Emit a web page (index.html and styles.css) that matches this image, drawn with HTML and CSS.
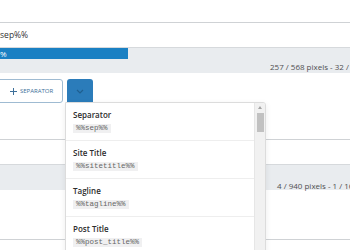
FILE: index.html
```html
<!DOCTYPE html>
<html lang="en">
<head>
    <meta charset="UTF-8">
    <meta name="viewport" content="width=device-width, initial-scale=1.0">
    <title>Title editor</title>
    <link rel="stylesheet" href="styles.css">
</head>
<body>
    <div class="page">
        <!-- Title field -->
        <div class="field">
            <div class="input"><span class="value">%%sep%%</span></div>
            <div class="meter">
                <div class="bar" style="width:128px"><span>%</span></div>
                <div class="count">257 / 568 pixels - 32 / 60</div>
            </div>
        </div>

        <!-- Variable buttons -->
        <div class="tools">
            <button type="button" class="btn-outline">
                <svg width="7" height="7" viewBox="0 0 7 7"><path d="M3.5 0v7M0 3.5h7" stroke="#3d6f99" stroke-width="1"/></svg>
                <span>SEPARATOR</span>
            </button>
            <div class="picker">
                <button type="button" class="btn-toggle">
                    <svg width="8" height="5" viewBox="0 0 8 5"><path d="M1 1l3 3 3-3" fill="none" stroke="#1f5f8f" stroke-width="1.2"/></svg>
                </button>
                <div class="menu">
                    <ul class="menu-list">
                        <li><strong>Separator</strong><code>%%sep%%</code></li>
                        <li><strong>Site Title</strong><code>%%sitetitle%%</code></li>
                        <li><strong>Tagline</strong><code>%%tagline%%</code></li>
                        <li><strong>Post Title</strong><code>%%post_title%%</code></li>
                    </ul>
                    <div class="scrollbar">
                        <span class="arrow"></span>
                        <span class="thumb"></span>
                    </div>
                </div>
            </div>
        </div>

        <!-- Description field -->
        <div class="field field-desc">
            <div class="input"></div>
            <div class="meter">
                <div class="bar" style="width:0"></div>
                <div class="count">4 / 940 pixels - 1 / 160</div>
            </div>
        </div>

        <div class="field field-next">
            <div class="input"></div>
        </div>
    </div>
</body>
</html>
```

FILE: styles.css
```css
body {
    margin: 0;
    font-family: "Open Sans", Arial, sans-serif;
    background-color: #fff;
    color: #333;
    overflow: hidden;
}

.page {
    width: 350px;
    height: 250px;
    padding-top: 22px;
    box-sizing: border-box;
    overflow: hidden;
}

/* Campos */
.input {
    height: 24px;
    border-top: 1px solid #cfd2d5;
    border-bottom: 1px solid #d6d9dc;
    font-size: 8.5px;
    line-height: 24px;
    color: #333;
    white-space: nowrap;
    overflow: hidden;
}
.value {
    display: inline-block;
    margin-left: -14px;
}
.meter {
    height: 25px;
    background-color: #e9ecef;
}
.bar {
    height: 11px;
    background-color: #1a80c3;
    color: #fff;
    font-size: 8px;
    line-height: 11px;
    white-space: nowrap;
    overflow: hidden;
}
.count {
    margin-top: 2px;
    font-size: 8px;
    line-height: 12px;
    color: #4f4f4f;
    white-space: nowrap;
    padding-left: 270px;
}
.field-desc {
    margin-top: 36px;
}
.field-desc .count {
    padding-left: 277px;
    margin-top: 4px;
}
.field-next {
    margin-top: 49px;
}

/* Botões */
.tools {
    display: flex;
    gap: 4px;
    margin-top: 6px;
}
.btn-outline {
    display: flex;
    align-items: center;
    gap: 3px;
    width: 71px;
    height: 24px;
    margin-left: -8px;
    padding: 0 0 0 17px;
    background: #fff;
    border: 1px solid #9fbbd2;
    border-radius: 3px;
    font-family: "Open Sans", Arial, sans-serif;
    font-size: 6px;
    color: #3d6f99;
}
.picker {
    position: relative;
}
.btn-toggle {
    display: flex;
    align-items: center;
    justify-content: center;
    width: 26px;
    height: 24px;
    padding: 0;
    border: none;
    border-radius: 3px 3px 0 0;
    background-color: #2b7cba;
}

/* Menu de variáveis */
.menu {
    position: absolute;
    top: 23px;
    left: -2px;
    width: 199px;
    height: 150px;
    display: flex;
    background: #fff;
    border: 1px solid #dcdcdc;
    border-radius: 0 3px 0 0;
    box-shadow: 0 2px 6px rgba(0, 0, 0, 0.08);
    overflow: hidden;
}
.menu-list {
    flex: 1;
    list-style: none;
    margin: 0;
    padding: 0;
}
.menu-list li {
    display: flex;
    flex-direction: column;
    align-items: flex-start;
    gap: 4px;
    padding: 7px;
    border-bottom: 1px solid #eeeeee;
}
.menu-list strong {
    font-size: 8px;
    line-height: 10px;
    font-weight: 600;
    color: #2c2c2c;
}
.menu-list code {
    font-family: "Liberation Mono", "DejaVu Sans Mono", monospace;
    font-size: 7.5px;
    line-height: 9px;
    padding: 0 3px;
    background-color: #f0f0f1;
    color: #666;
}
.scrollbar {
    width: 10px;
    background-color: #f1f1f1;
    border-left: 1px solid #e6e6e6;
    display: flex;
    flex-direction: column;
    align-items: center;
}
.arrow {
    margin-top: 3px;
    width: 0;
    height: 0;
    border-left: 2px solid transparent;
    border-right: 2px solid transparent;
    border-bottom: 3px solid #a3a3a3;
}
.thumb {
    margin-top: 4px;
    width: 7px;
    height: 19px;
    background-color: #c1c1c1;
}
```
